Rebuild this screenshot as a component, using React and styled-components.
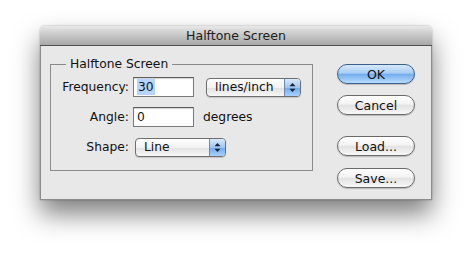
import React from 'react';
import styled, { createGlobalStyle } from 'styled-components';

const GlobalStyle = createGlobalStyle`
  html, body {
    margin: 0;
    padding: 0;
    background: #ffffff;
  }
  body {
    font-family: 'DejaVu Sans', 'Liberation Sans', sans-serif;
    color: #111;
  }
`;

const Stage = styled.div`
  width: 472px;
  height: 255px;
  padding: 26px 0 0 40px;
  box-sizing: border-box;
`;

const Window = styled.div`
  width: 392px;
  height: 174px;
  display: flex;
  flex-direction: column;
  border-radius: 5px 5px 0 0;
  box-shadow: 0 14px 26px rgba(0, 0, 0, 0.5), 0 0 2px rgba(0, 0, 0, 0.35);
`;

const TitleBar = styled.div`
  height: 19px;
  flex: none;
  display: flex;
  align-items: center;
  justify-content: center;
  font-size: 12.5px;
  color: #1c1c1c;
  border-radius: 5px 5px 0 0;
  background: linear-gradient(#e8e8e8, #c9c9c9 45%, #a8a8a8);
  border-bottom: 1px solid #505050;
`;

const Body = styled.div`
  flex: 1;
  display: flex;
  background: #e8e8e8;
  border: 1px solid #8c8c8c;
  border-top: none;
  padding: 11px 0 0 9px;
`;

const Group = styled.fieldset`
  width: 263px;
  height: 114px;
  box-sizing: border-box;
  margin: 0;
  padding: 5px 0 0 0;
  border: 1px solid #8a8a8a;
  display: grid;
  grid-template-columns: 78px 61px auto;
  grid-auto-rows: 20px;
  column-gap: 4px;
  row-gap: 10px;
  align-content: start;
  font-size: 12.3px;
`;

const Legend = styled.legend`
  margin-left: 15px;
  padding: 0 4px;
  font-size: 12.3px;
  line-height: 15px;
`;

const Label = styled.label`
  display: flex;
  align-items: center;
  justify-content: flex-end;
`;

const Field = styled.div`
  box-sizing: border-box;
  height: 20px;
  border: 1px solid #7a7a7a;
  border-top-color: #5e5e5e;
  background: #fff;
  box-shadow: inset 0 1px 1px rgba(0, 0, 0, 0.18);
  display: flex;
  align-items: center;
  padding-left: 3px;
`;

const Selected = styled.span`
  background: #b5d5ff;
  padding: 1px 1px;
`;

const Units = styled.div`
  display: flex;
  align-items: center;
  margin-left: ${(p) => p.$shift || 0}px;
`;

const Popup = styled.div`
  box-sizing: border-box;
  width: ${(p) => p.$width}px;
  height: 19px;
  margin-left: ${(p) => p.$shift || 0}px;
  align-self: center;
  display: flex;
  border: 1px solid #6e6e6e;
  border-radius: 4px;
  overflow: hidden;
  background: linear-gradient(#ffffff, #f2f2f2 50%, #e1e1e1 51%, #f7f7f7);
  box-shadow: 0 1px 1px rgba(0, 0, 0, 0.15);
  grid-column: ${(p) => p.$span || 'auto'};
`;

const PopupText = styled.div`
  flex: 1;
  display: flex;
  align-items: center;
  padding-left: 8px;
`;

const Stepper = styled.div`
  width: 15px;
  border-left: 1px solid #6e8ab0;
  display: flex;
  align-items: center;
  justify-content: center;
  background: linear-gradient(#d8e9fb, #9fc6f2 50%, #6ea9ec 51%, #a9d2fb);
`;

const Actions = styled.div`
  display: flex;
  flex-direction: column;
  margin-left: 24px;
  padding-top: 7px;
`;

const Button = styled.button`
  width: 78px;
  height: 20px;
  margin: 0 0 ${(p) => p.$gap || 0}px 0;
  padding: 0;
  font-family: inherit;
  font-size: 12.5px;
  color: #111;
  border-radius: 10px;
  border: 1px solid ${(p) => (p.$primary ? '#3c5f8e' : '#6a6a6a')};
  background: ${(p) =>
    p.$primary
      ? 'linear-gradient(#d6e9fc, #a7cdf4 45%, #74adee 52%, #b6dcfd)'
      : 'linear-gradient(#ffffff, #f3f3f3 45%, #e2e2e2 52%, #f8f8f8)'};
  box-shadow: 0 1px 1px rgba(0, 0, 0, 0.2);
`;

function Arrows() {
  return (
    <svg width="7" height="11" viewBox="0 0 7 11">
      <path d="M3.5 1 L6.5 4.2 L0.5 4.2 Z" fill="#1b2433" />
      <path d="M3.5 10 L6.5 6.8 L0.5 6.8 Z" fill="#1b2433" />
    </svg>
  );
}

export default function App() {
  return (
    <>
      <GlobalStyle />
      <Stage>
        <Window>
          <TitleBar>Halftone Screen</TitleBar>
          <Body>
            <Group>
              <Legend>Halftone Screen</Legend>
              <Label>Frequency:</Label>
              <Field>
                <Selected>30</Selected>
              </Field>
              <Popup $width={95} $shift={8}>
                <PopupText>lines/inch</PopupText>
                <Stepper>
                  <Arrows />
                </Stepper>
              </Popup>

              <Label>Angle:</Label>
              <Field>0</Field>
              <Units $shift={5}>degrees</Units>

              <Label>Shape:</Label>
              <Popup $width={91} $shift={2} $span="2 / span 2">
                <PopupText>Line</PopupText>
                <Stepper>
                  <Arrows />
                </Stepper>
              </Popup>
            </Group>
            <Actions>
              <Button $primary $gap={11}>OK</Button>
              <Button $gap={21}>Cancel</Button>
              <Button $gap={12}>Load...</Button>
              <Button>Save...</Button>
            </Actions>
          </Body>
        </Window>
      </Stage>
    </>
  );
}
